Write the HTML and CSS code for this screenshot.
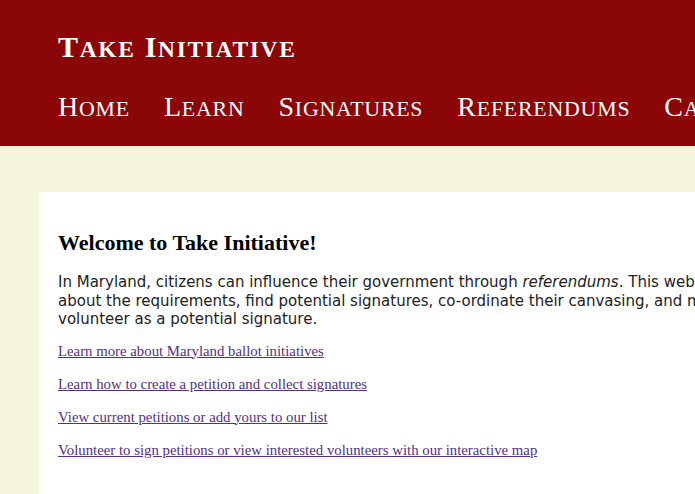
FILE: index.html
```html
<!DOCTYPE html>
<html>
<head>
<meta charset="utf-8">
<link rel="stylesheet" href="styles.css">
</head>
<body>
<header class="site-header">
  <div class="site-title">T<span class="sc">ake</span> I<span class="sc">nitiative</span></div>
  <nav class="site-nav">
    <a href="#">H<span class="sc">ome</span></a>
    <a href="#">L<span class="sc">earn</span></a>
    <a href="#">S<span class="sc">ignatures</span></a>
    <a href="#">R<span class="sc">eferendums</span></a>
    <a href="#">C<span class="sc">anvasing</span></a>
  </nav>
</header>
<main class="page">
  <section class="card">
    <h2 class="heading">Welcome to Take Initiative!</h2>
    <p class="intro">In Maryland, citizens can influence their government through <em>referendums</em>. This website helps citizens learn<br>about the requirements, find potential signatures, co-ordinate their canvasing, and more. You can also<br>volunteer as a potential signature.</p>
    <p class="link-row"><a href="#">Learn more about Maryland ballot initiatives</a></p>
    <p class="link-row"><a href="#">Learn how to create a petition and collect signatures</a></p>
    <p class="link-row"><a href="#">View current petitions or add yours to our list</a></p>
    <p class="link-row"><a href="#">Volunteer to sign petitions or view interested volunteers with our interactive map</a></p>
  </section>
</main>
</body>
</html>
```
FILE: styles.css
```css
html, body {
  margin: 0;
  padding: 0;
  overflow: hidden;
}
body {
  background: #f5f5dc;
}
.site-header {
  background: #8b0606;
  height: 146px;
  padding: 29px 0 0 58px;
  box-sizing: border-box;
  color: #fff;
  font-family: "Liberation Serif", serif;
  width: 1000px;
}
.sc {
  text-transform: uppercase;
  font-size: 0.78em;
}
.site-title {
  font-size: 30px;
  font-weight: bold;
  letter-spacing: 1.7px;
  line-height: 36px;
}
.site-nav {
  display: flex;
  gap: 34px;
  margin-top: 22px;
  white-space: nowrap;
}
.site-nav a {
  color: #fff;
  text-decoration: none;
  font-size: 28px;
  letter-spacing: 0.8px;
  line-height: 36px;
}
.page {
  padding: 46px 0 0 39px;
}
.card {
  background: #fff;
  padding: 38px 19px 30px;
  width: 880px;
}
.heading {
  font-family: "Liberation Serif", serif;
  font-size: 22px;
  font-weight: bold;
  margin: 0 0 17px;
  color: #000;
}
.intro {
  font-family: "DejaVu Sans", Verdana, sans-serif;
  font-size: 15px;
  line-height: 18.5px;
  color: #222;
  margin: 0 0 14px;
  white-space: nowrap;
}
.link-row {
  font-family: "Liberation Serif", serif;
  font-size: 14.8px;
  line-height: 17px;
  margin: 0 0 16px;
}
.link-row a {
  color: #52307f;
}
```
